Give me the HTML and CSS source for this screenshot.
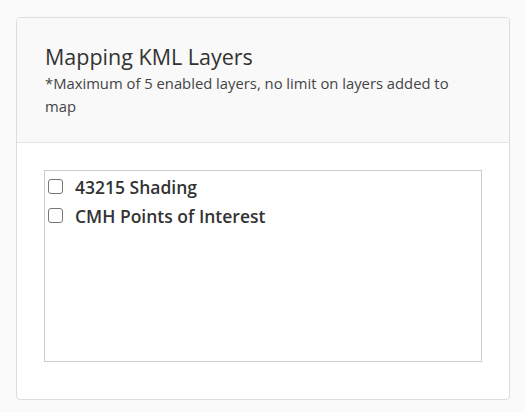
FILE: index.html
```html
<!DOCTYPE html>
<html>
<head>
<meta charset="utf-8">
<link rel="stylesheet" href="styles.css">
</head>
<body>
<div class="card">
  <div class="card-header">
    <h3 class="title">Mapping KML Layers</h3>
    <p class="note">*Maximum of 5 enabled layers, no limit on layers added to map</p>
  </div>
  <div class="card-body">
    <div class="layer-box">
      <label class="layer"><input type="checkbox" class="cb"><span>43215 Shading</span></label>
      <label class="layer"><input type="checkbox" class="cb"><span>CMH Points of Interest</span></label>
    </div>
  </div>
</div>
</body>
</html>
```

FILE: styles.css
```css
html, body {
  margin: 0;
  padding: 0;
  background: #fafafa;
  font-family: "Open Sans", "Liberation Sans", sans-serif;
  color: #333;
}
body {
  padding: 17px 15px 12px 16px;
}
.card {
  border: 1px solid #ddd;
  border-radius: 4px;
  background: #fff;
  overflow: hidden;
}
.card-header {
  background: #f9f9f9;
  border-bottom: 1px solid #e3e3e3;
  padding: 24px 28px 24px 28px;
}
.title {
  margin: 0;
  font-size: 21.5px;
  font-weight: 400;
  line-height: 30px;
  color: #333;
}
.note {
  margin: 0;
  font-size: 14.8px;
  line-height: 23px;
  color: #444;
}
.card-body {
  padding: 27px 27px 37px 27px;
}
.layer-box {
  border: 1px solid #ccc;
  height: 187px;
  padding: 1px 3px 2px 3px;
}
.layer {
  display: flex;
  align-items: center;
  height: 29px;
  font-size: 17.5px;
  font-weight: 600;
  color: #333;
}
.cb {
  appearance: none;
  -webkit-appearance: none;
  margin: 0 12px 0 0;
  width: 15px;
  height: 15px;
  border: 1px solid #767676;
  border-radius: 3px;
  background: #fff;
  flex: none;
}
```
